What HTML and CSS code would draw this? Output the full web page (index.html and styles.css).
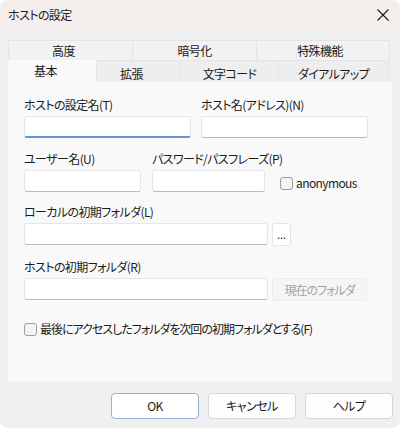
FILE: index.html
```html
<!DOCTYPE html>
<html lang="ja">
<head>
<meta charset="utf-8">
<link rel="stylesheet" href="styles.css">
</head>
<body>
<div class="window">
  <div class="titlebar">
    <span class="title">ホストの設定</span>
    <svg class="close" width="12" height="12" viewBox="0 0 12 12"><path d="M0.5 0.5 L11.5 11.5 M11.5 0.5 L0.5 11.5" stroke="#1a1a1a" stroke-width="1.1" fill="none"/></svg>
  </div>
  <div class="main">
    <div class="tabs">
      <div class="tabrow row1">
        <div class="tab t-a">高度</div>
        <div class="tab t-b">暗号化</div>
        <div class="tab t-c">特殊機能</div>
      </div>
      <div class="tabrow row2">
        <div class="tab sel t-d">基本</div>
        <div class="tab t-e">拡張</div>
        <div class="tab t-f">文字コード</div>
        <div class="tab t-g">ダイアルアップ</div>
      </div>
    </div>
    <div class="panel">
      <div class="row">
        <div class="field w167">
          <div class="label">ホストの設定名(T)</div>
          <div class="input focus"></div>
        </div>
        <div class="field w167 ml10">
          <div class="label">ホスト名(アドレス)(N)</div>
          <div class="input"></div>
        </div>
      </div>
      <div class="row mt13">
        <div class="field w117">
          <div class="label">ユーザー名(U)</div>
          <div class="input"></div>
        </div>
        <div class="field w113 ml11">
          <div class="label">パスワード/パスフレーズ(P)</div>
          <div class="input"></div>
        </div>
        <div class="anon">
          <span class="check"></span><span class="anon-text">anonymous</span>
        </div>
      </div>
      <div class="field mt12">
        <div class="label">ローカルの初期フォルダ(L)</div>
        <div class="inline">
          <div class="input w244"></div>
          <div class="btn small">...</div>
        </div>
      </div>
      <div class="field mt13">
        <div class="label">ホストの初期フォルダ(R)</div>
        <div class="inline">
          <div class="input w244"></div>
          <div class="btn disabled">現在のフォルダ</div>
        </div>
      </div>
      <div class="last">
        <span class="check"></span><span class="last-text">最後にアクセスしたフォルダを次回の初期フォルダとする(F)</span>
      </div>
    </div>
    <div class="buttons">
      <div class="pbtn default">OK</div>
      <div class="pbtn">キャンセル</div>
      <div class="pbtn">ヘルプ</div>
    </div>
  </div>
</div>
</body>
</html>
```

FILE: styles.css
```css
* { box-sizing: border-box; }
html, body { margin: 0; padding: 0; }
body {
  width: 400px;
  height: 428px;
  background: #ffffff;
  font-family: "Noto Sans CJK JP", "Noto Sans", sans-serif;
  font-size: 12px;
  font-feature-settings: "palt";
  color: #1b1b1b;
  overflow: hidden;
}
.window {
  width: 400px;
  height: 428px;
  background: #f0f0f0;
  border-radius: 8px;
  overflow: hidden;
}
.titlebar {
  height: 30px;
  background: #f4eeec;
  display: flex;
  align-items: center;
  justify-content: space-between;
  padding: 0 11px 0 8px;
}
.title { font-size: 12px; line-height: 16px; letter-spacing: -0.6px; }
.close { display: block; }
.main { padding: 10px 8px 0 8px; }
.tabs { width: 384px; }
.tabrow { display: flex; }
.row1 { height: 20px; }
.row2 { height: 22px; }
.tab {
  display: flex;
  align-items: center;
  justify-content: center;
  background: #f2f2f2;
  border: 1px solid #e4e4e4;
  border-bottom: none;
  margin-right: -1px;
  font-size: 12px;
  line-height: 16px;
  letter-spacing: -0.6px;
}
.row2 .tab { padding-top: 4px; background: #eeeeee; }
.row2 .tab.sel { padding-top: 0; padding-bottom: 2px; background: #f9f9f9; border-color: #f9f9f9; }
.t-a { width: 125px; padding-right: 14px; }
.t-b { width: 125px; }
.t-c { width: 134px; padding-right: 6px; }
.t-d { width: 89px; padding-right: 14px; }
.t-e { width: 85px; padding-right: 14px; }
.t-f { width: 99px; }
.t-g { width: 111px; }
.panel {
  width: 384px;
  height: 300px;
  background: #f9f9f9;
  padding: 15px 0 0 16px;
}
.row { display: flex; align-items: flex-end; }
.field { display: flex; flex-direction: column; }
.label { line-height: 16px; height: 16px; margin-bottom: 3px; white-space: nowrap; letter-spacing: -0.6px; }
.input {
  height: 22px;
  background: #ffffff;
  border: 1px solid #e6e6e6;
  border-bottom: 1px solid #b9b9b9;
  border-radius: 3px;
}
.input.focus { border-bottom: 2px solid #5f97d0; }
.w167 { width: 167px; }
.w117 { width: 117px; }
.w113 { width: 113px; }
.w244 { width: 244px; }
.ml10 { margin-left: 10px; }
.ml11 { margin-left: 11px; }
.mt13 { margin-top: 13px; }
.mt12 { margin-top: 12px; }
.anon {
  display: flex;
  align-items: center;
  margin-left: 15px;
  height: 22px;
  margin-bottom: -2px;
}
.check {
  display: inline-block;
  width: 13px;
  height: 13px;
  border: 1px solid #9d9d9d;
  border-radius: 3px;
  background: #f4f4f4;
  flex: none;
}
.anon-text { margin-left: 3px; line-height: 16px; letter-spacing: -0.6px; }
.inline { display: flex; gap: 4px; }
.btn {
  height: 23px;
  background: #ffffff;
  border: 1px solid #e4e4e4;
  border-radius: 3px;
  display: flex;
  align-items: center;
  justify-content: center;
  line-height: 16px;
}
.btn.small { width: 19px; font-size: 11px; padding-bottom: 2px; }
.btn.disabled { width: 95px; background: #f5f5f5; color: #a2a2a2; border-color: #ececec; letter-spacing: -1px; }
.last {
  display: flex;
  align-items: center;
  margin-top: 20px;
  height: 16px;
}
.last-text { margin-left: 3px; line-height: 16px; white-space: nowrap; letter-spacing: -1px; }
.buttons {
  display: flex;
  justify-content: flex-end;
  gap: 9px;
  margin-top: 11px;
  margin-right: -1px;
}
.pbtn {
  width: 88px;
  height: 26px;
  background: #fdfdfd;
  border: 1px solid #d6d6d6;
  border-radius: 4px;
  display: flex;
  align-items: center;
  justify-content: center;
  font-size: 12px;
  line-height: 16px;
  letter-spacing: -0.5px;
}
.pbtn.default { border-color: #8fb3dc; background: #ffffff; }
```
